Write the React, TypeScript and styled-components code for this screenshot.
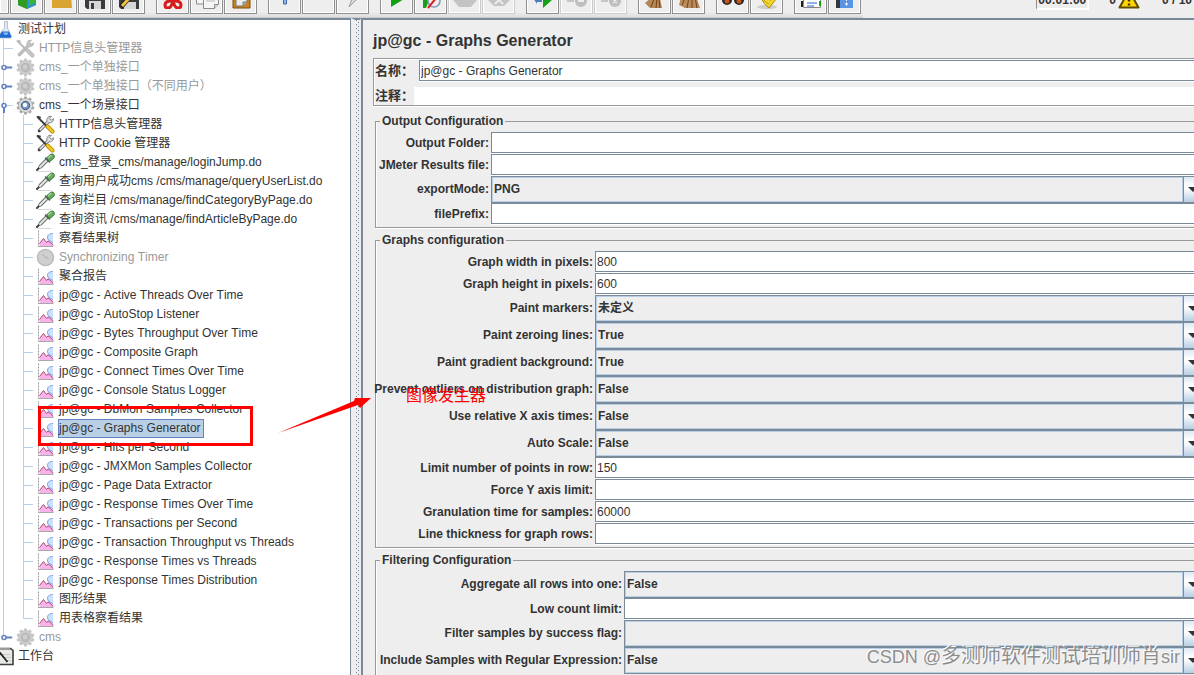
import React from "react";
import styled, { createGlobalStyle, css } from "styled-components";

const INK = "#333333";
const STEEL = "#7a8a99";
const SKY = "#b8cfe5";
const PANEL = "#eeeeee";

const GlobalStyle = createGlobalStyle`
  *, *::before, *::after { box-sizing: border-box; }
  html, body, #root { height: 100%; }
  body {
    margin: 0;
    overflow: hidden;
    background: ${PANEL};
    color: ${INK};
    font: 12px/16px "Liberation Sans", "Noto Sans CJK SC", sans-serif;
    font-kerning: none;
  }
  input, select, button { font: inherit; color: inherit; }
`;

const Shell = styled.div`
  position: relative;
  display: flex;
  flex-direction: column;
  height: 100vh;
  overflow: hidden;
`;

/* ---------- tool bar ---------- */

const TopBar = styled.header`
  display: flex;
  flex: 0 0 18px;
  justify-content: space-between;
  align-items: flex-end;
  overflow: hidden;
`;

const Toolbar = styled.div`
  display: flex;
  gap: 11px;
  align-items: flex-end;
  height: 18px;
  padding: 0 2px 3px 0;
  background: linear-gradient(#eeeeee 70%, #dddddd);
  border-bottom: 1px solid #cccccc;
`;

const ToolGroup = styled.div`
  display: flex;
  gap: 1px;
`;

const ToolButton = styled.button<{ $cut?: boolean }>`
  display: flex;
  justify-content: center;
  align-items: center;
  width: ${(p) => (p.$cut ? 9 : 33)}px;
  height: 34px;
  padding: 0;
  background: ${PANEL};
  border: 1px solid #8f8f8f;
  border-left-width: ${(p) => (p.$cut ? 0 : 1)}px;
  box-shadow: inset 0 0 0 1px #ffffff;
  &:disabled { border-color: #cccccc; }
  svg { flex: none; }
`;

const Status = styled.div`
  display: flex;
  align-items: flex-end;
  gap: 8px;
  height: 18px;
  margin-right: 2px;
  padding-bottom: 8px;
  font-weight: bold;
  white-space: nowrap;
`;

const Clock = styled.output`
  padding: 0 1px;
  margin-right: 12px;
  border: solid;
  border-width: 1px 2px 2px 1px;
  border-color: #8f8f8f #ffffff #ffffff #8f8f8f;
`;

const Count = styled.span`
  padding-bottom: 2px;
`;

const WarningSlot = styled.span`
  display: flex;
  margin: 0 14px 1px -6px;
`;

/* ---------- split view ---------- */

const Split = styled.div`
  display: flex;
  flex: 1;
  min-height: 0;
`;

const TreePane = styled.nav`
  flex: 0 0 351px;
  overflow: hidden;
  background: #ffffff;
  border-top: 2px solid ${STEEL};
  border-right: 1px solid ${STEEL};
`;

const Divider = styled.div`
  flex: 0 0 10px;
  background:
    conic-gradient(at 1px 1px, transparent 75%, #6f7f98 0) 1px 0 / 4px 4px repeat-y,
    conic-gradient(at 1px 1px, transparent 75%, #6f7f98 0) 3px 2px / 4px 4px repeat-y,
    ${PANEL};
  border: solid ${PANEL};
  border-width: 2px 1px 0 4px;
  border-top-color: ${STEEL};
`;

const MainPane = styled.main`
  flex: 1;
  min-width: 0;
  overflow: hidden;
  border-top: 2px solid ${STEEL};
  border-left: 2px solid ${STEEL};
`;

/* ---------- tree ---------- */

const TreeList = styled.ul`
  margin: 0;
  padding: 0;
  list-style: none;
`;

const TreeRow = styled.li`
  display: flex;
  align-items: center;
  height: 19px;
  white-space: nowrap;
`;

type GuideKind = "pass" | "branch" | "last" | "none";

const Guide = styled.span<{ $kind: GuideKind; $wide?: boolean }>`
  display: flex;
  align-items: center;
  flex: 0 0 ${(p) => (p.$wide ? 20 : 16)}px;
  height: 19px;
  background-repeat: no-repeat;
  ${(p) =>
    p.$kind !== "none" &&
    css`
      background-image: linear-gradient(${SKY}, ${SKY}), linear-gradient(${SKY}, ${SKY});
      background-position: 3px 0, 3px 9px;
      background-size: 1px ${p.$kind === "last" ? "10px" : "100%"}, ${p.$kind === "pass" ? "1px" : "10px"} 1px;
    `}
`;

const IconSlot = styled.span<{ $root?: boolean }>`
  display: flex;
  justify-content: flex-end;
  flex: 0 0 ${(p) => (p.$root ? 14 : 19)}px;
  overflow: hidden;
  margin-right: 3px;
`;

const NodeLabel = styled.a<{ $off?: boolean; $selected?: boolean }>`
  height: 19px;
  padding: 0 2px 0 0;
  border: 1px solid ${(p) => (p.$selected ? "#6382bf" : "transparent")};
  background: ${(p) => (p.$selected ? SKY : "transparent")};
  color: ${(p) => (p.$off ? "#999999" : INK)};
  line-height: 17px;
  text-decoration: none;
`;

/* ---------- form ---------- */

const Form = styled.form`
  display: flex;
  flex-direction: column;
  gap: 4px;
  margin-right: -16px;
  padding: 8px 2px 0 10px;
`;

const Title = styled.h1`
  margin: 0;
  font-size: 16px;
  line-height: 26px;
`;

const NameBox = styled.div`
  display: grid;
  gap: 6px;
  margin-bottom: 3px;
  padding: 1px;
  border: 1px solid #999999;
  box-shadow: inset 1px 1px 0 #ffffff, 0 1px 0 #ffffff;
`;

const NameRow = styled.div<{ $gap: number }>`
  display: flex;
  align-items: center;
  gap: ${(p) => p.$gap}px;
  font-size: 13px;
`;

const Label = styled.label`
  justify-self: end;
  font-weight: bold;
  font-kerning: normal;
  white-space: nowrap;
`;

const TextInput = styled.input<{ $plain?: boolean }>`
  flex: 1;
  width: 100%;
  min-width: 0;
  height: ${(p) => (p.$plain ? 17 : 21)}px;
  padding: 0 1px;
  border: ${(p) => (p.$plain ? 0 : 1)}px solid ${STEEL};
  border-radius: 0;
  outline: 0;
  background: #ffffff;
  box-shadow: 0 1px 0 #ffffff;
  font-size: 12px;
`;

const Group = styled.fieldset<{ $labels: number }>`
  display: grid;
  grid-template-columns: ${(p) => p.$labels}px minmax(0, 1fr);
  column-gap: 2px;
  align-items: center;
  min-width: 0;
  margin: 0 0 0 2px;
  padding: 3px 4px 2px;
  border: 1px solid #999999;
  box-shadow: inset 1px 0 0 #ffffff, 0 1px 0 #ffffff;
`;

const Legend = styled.legend`
  height: 16px;
  padding: 0 2px;
  font-weight: bold;
`;

const FieldRow = styled.div`
  display: grid;
  grid-column: 1 / -1;
  grid-template-columns: subgrid;
  align-items: center;
  padding-bottom: 1px;
`;

const ComboRow = styled(FieldRow)`
  padding-bottom: 0;
  ${Label} { padding-bottom: 2px; }
`;

const Combo = styled.div`
  display: flex;
  height: 27px;
  border: 1px solid ${STEEL};
`;

const Select = styled.select`
  flex: 1;
  min-width: 0;
  padding: 0 1px 2px;
  appearance: none;
  border: 1px solid ${SKY};
  border-radius: 0;
  outline: 0;
  background: ${PANEL};
  font-weight: bold;
`;

const ComboArrow = styled.span`
  display: flex;
  justify-content: center;
  align-items: center;
  flex: 0 0 19px;
  border-left: 1px solid ${STEEL};
  background: linear-gradient(#dde8f3, #ffffff 35%, #ffffff 45%, #b8cfe5);
`;

/* ---------- annotations over the window ---------- */

const Frame = styled.div`
  position: absolute;
  left: 38px;
  top: 406px;
  width: 215px;
  height: 40px;
  border: 3px solid #ff0000;
  pointer-events: none;
`;

const Pointer = styled.svg`
  position: absolute;
  left: 276px;
  top: 396px;
  pointer-events: none;
`;

const Note = styled.p`
  position: absolute;
  left: 406px;
  top: 385px;
  margin: 0;
  color: #ff0000;
  font-size: 16px;
  line-height: 22px;
`;

const Watermark = styled.p`
  position: absolute;
  right: 14px;
  bottom: 4px;
  margin: 0;
  color: #8e8e8e;
  font-size: 18px;
  line-height: 28px;
  text-shadow: -1px -1px 0 #ffffff;
  white-space: nowrap;
  pointer-events: none;
`;

const Author = styled.span`
  font-size: 20px;
`;

/* ---------- icons ---------- */

const gearTeeth = Array.from({ length: 10 }, (_, i) => i * 36);

const Gear = ({ live }: { live?: boolean }) => (
  <svg width="19" height="19" viewBox="0 0 19 19">
    <g fill={live ? "#aaaaaa" : "#c6c6c6"}>
      {gearTeeth.map((a) => (
        <rect key={a} x="8" y="0.5" width="3" height="4" rx="0.6" transform={`rotate(${a} 9.5 9.5)`} />
      ))}
    </g>
    <circle cx="9.5" cy="9.5" r="7" fill={live ? "#dcdee0" : "#cdcdcd"} stroke={live ? "#a2a2a2" : "#c2c2c2"} strokeWidth="0.8" />
    <circle cx="9.5" cy="9.5" r="4.2" fill={live ? "#6f93c0" : "#bdbdbd"} stroke={live ? "#4a5c74" : "#b4b4b4"} />
    <circle cx="9" cy="9" r="2.2" fill={live ? "#f2f8ff" : "#cfcfcf"} />
  </svg>
);

const Tools = ({ off }: { off?: boolean }) => (
  <svg width="19" height="19" viewBox="0 0 19 19" fill="none" strokeLinecap="round">
    <path d="M3.500 15.500L13.500 5.500" stroke={off ? "#b8b8b8" : "#6e6e6e"} strokeWidth="3.200" />
    <path
      d="M15.200 1.200l-2.700 0.400-1.700 2.600 0.400 3 3 0.700 2.700-1.500 0.800-2.600-2.300 1.200-1.700-1.300z"
      fill={off ? "#c2c2c2" : "#d9dcdf"}
      stroke={off ? "#b5b5b5" : "#777777"}
      strokeWidth="0.8"
    />
    <path d="M3.500 15.500L13 6" stroke={off ? "#c2c2c2" : "#e2e2e2"} strokeWidth="1.600" />
    <path d="M2 2.500L10.500 11" stroke={off ? "#b8b8b8" : "#3c3c3c"} strokeWidth="1.800" />
    <path d="M1.500 2l2.500 0.500" stroke={off ? "#b8b8b8" : "#3c3c3c"} strokeWidth="1.800" />
    <path d="M11.500 11.500l5 5" stroke={off ? "#b8b8b8" : "#a67c00"} strokeWidth="4" />
    <path d="M11.500 11.500l5 5" stroke={off ? "#c4c4c4" : "#f6c61c"} strokeWidth="2.600" />
    <circle cx="3" cy="16" r="1.300" fill={off ? "#b8b8b8" : "#444444"} />
  </svg>
);

const Pipette = () => (
  <svg width="19" height="19" viewBox="0 0 19 19" fill="none" strokeLinecap="round">
    <path d="M1 17L5 13" stroke="#3f3f3f" strokeWidth="2" />
    <path d="M4.500 13.500L10.500 7.500" stroke="#6c706e" strokeWidth="4" />
    <path d="M4 14L10.500 7.500" stroke="#e4e9e6" strokeWidth="2" />
    <path d="M13 6L16 3.500" stroke="#427f3e" strokeWidth="5.600" />
    <path d="M13 6L16 3.500" stroke="#68ab5e" strokeWidth="4" />
    <path d="M12.500 4.500L15 2.500" stroke="#a9d99d" strokeWidth="1.200" />
    <path d="M9.500 5l4 4" stroke="#47664a" strokeWidth="1.600" />
    <path d="M2 18.500h13" stroke="#d5d5d5" />
  </svg>
);

const Chart = () => (
  <svg width="18" height="19" viewBox="0 0 18 19">
    <path d="M1.500 1.500v16" fill="none" stroke="#9a9a9a" strokeDasharray="2 1" />
    <path d="M1 17.500h15.500" fill="none" stroke="#a8a8a8" />
    <path d="M2.500 17v-3l4-4.500 2.500 3.500 3-1.500 4 1.500v4z" fill="#f7b3ea" />
    <path d="M16 4.500h-3l-3 2.500v4l2.500 2.500 3.500 1z" fill="#cbe1fd" />
    <path d="M16 4.500h-1.500q-4.500 1-4 4.500 .3 2.500 5.500 4.500" fill="none" stroke="#86a9e2" />
    <path d="M2.500 14.500l4-5 3 4 1.500-1.500 2.500 1.500 2.500 3" fill="none" stroke="#b8456f" />
  </svg>
);

const Timer = () => (
  <svg width="19" height="19" viewBox="0 0 19 19">
    <circle cx="9.500" cy="9.500" r="8" fill="#cfcfcf" stroke="#bcbcbc" strokeWidth="1.500" />
    <path d="M6.500 6l3 3.500 3 1" fill="none" stroke="#a9a9a9" />
  </svg>
);

const Flask = () => (
  <svg width="14" height="19" viewBox="0 0 14 19">
    <path d="M4.500 1.500h3v6.500l4 8.500q0 1.500-1.500 1.500H.5V13l4-5z" fill="#e4eaf2" stroke="#a7b4c6" strokeWidth="0.8" />
    <path d="M2 11.500h7l2.300 5q0 1.300-1.300 1.300H0v-3z" fill="#1f6ad0" />
    <path d="M3 12.500l4.500-.3 1 2-4 1z" fill="#7fb4f5" />
  </svg>
);

const Clipboard = () => (
  <svg width="14" height="19" viewBox="0 0 14 19">
    <path d="M-3 1.500h13.500l2.500 2V17.500H-3z" fill="#e9e9e6" stroke="#3f3f3f" strokeWidth="1.600" />
    <path d="M0 2h10" stroke="#9a9a9a" strokeWidth="2" />
    <path d="M2 7.500h8M4 10.500h7M6 13.500h5" stroke="#bccbd2" />
    <path d="M-1 4.500L7.500 15" stroke="#222222" strokeWidth="1.800" />
  </svg>
);

const Knob = ({ open }: { open?: boolean }) => (
  <svg width="13" height="19" viewBox="0 0 13 19">
    <path d={open ? "M4 11v6" : "M6 9.500h6"} stroke="#6382bf" strokeWidth="2" />
    <circle cx="4" cy="9.500" r="2" fill="#ffffff" stroke="#6382bf" strokeWidth="1.600" />
  </svg>
);

const Warning = () => (
  <svg width="22" height="20" viewBox="0 0 22 20">
    <path d="M11 1.500L20.500 18.500H1.500z" fill="#ffd400" stroke="#5f4c00" strokeWidth="2" strokeLinejoin="round" />
    <path d="M11 6.500v6M11 14.500v2" stroke="#3b3000" strokeWidth="2.400" />
  </svg>
);

const toolArt: Record<string, React.ReactNode> = {
  New: null,
  Templates: (
    <>
      <path d="M3 8l9-4 9 4v12l-9 4-9-4z" fill="#4cb828" />
      <path d="M12 10l9-2v12l-9 4z" fill="#2f8fd8" />
      <path d="M14 9h6v9l-6 3z" fill="#38b43a" />
      <path d="M3 8l9 3v13l-9-4z" fill="#2d9c22" />
    </>
  ),
  Open: (
    <>
      <path d="M3 6h8l2 3h8v14H3z" fill="#a87408" />
      <path d="M3 10h19l1 13H3z" fill="#d9a432" />
    </>
  ),
  Save: (
    <>
      <path d="M2 4h20v20H4l-2-2z" fill="#3b3b3f" />
      <path d="M6 16h12v8H6z" fill="#d6d6d6" />
      <path d="M8 18h3v6H8z" fill="#3b3b3f" />
    </>
  ),
  "Save as": (
    <>
      <path d="M2 4h20v20H4l-2-2z" fill="#3b3b3f" />
      <path d="M7 17h12v7H7z" fill="#d6d6d6" />
      <path d="M4 22L15 9" stroke="#222222" strokeWidth="5" />
      <path d="M5 21L16 9" stroke="#f0c23a" strokeWidth="3" />
    </>
  ),
  Cut: (
    <g fill="none" stroke="#d81c1c" strokeWidth="3">
      <path d="M8 5l7 13M16 5L9 18" stroke="#9a9a9a" strokeWidth="2" />
      <path d="M12 14l-4 2q-4 1-4 4 0 3 3 3 4 0 5-9zM12 14l4 2q4 1 4 4 0 3-3 3-4 0-5-9z" />
    </g>
  ),
  Copy: (
    <g fill="#f6f6f4" stroke="#8c8c8c">
      <path d="M1.500 4h15v15h-15z" />
      <path d="M8.500 8h15v11l-4 4.500h-11z" />
      <path d="M19.500 23.500v-4h4" fill="#d8d8d8" />
      <path d="M11 13h9M11 16h9" stroke="#bbbbbb" />
    </g>
  ),
  Paste: (
    <>
      <path d="M4 3h17v20H4z" fill="#c88222" stroke="#7a4c0c" />
      <path d="M7 6h11v11l-4 4H7z" fill="#ececec" stroke="#777777" />
      <path d="M14 21v-4h4" fill="#bbbbbb" stroke="#777777" />
    </>
  ),
  Expand: <path d="M10.500 9h3v10h-3z" fill="#8fb6ea" stroke="#3d67ad" />,
  Collapse: null,
  Toggle: <path d="M8 22l3-8 8-8 3 3-9 8z" fill="#d5dcd8" stroke="#9aa39d" />,
  Start: <path d="M6 5l13 9L6 22z" fill="#12a012" />,
  "Start no pauses": (
    <>
      <path d="M4 5l7 8-4 10H4z" fill="#18a018" />
      <circle cx="15" cy="16" r="6" fill="#eeeeee" stroke="#8299bb" strokeWidth="1.500" />
      <path d="M9 23L22 7" stroke="#d82222" strokeWidth="2" />
    </>
  ),
  Stop: <path d="M6 3h12l6 6v6l-6 7H6l-6-7V9z" fill="#c4c4c4" />,
  Shutdown: (
    <>
      <path d="M7 3h10l6 6v6l-6 6H7l-6-6V9z" fill="#c4c4c4" />
      <path d="M8 11l8 8M16 11l-8 8" stroke="#ededed" strokeWidth="2" />
    </>
  ),
  "Remote start": (
    <>
      <path d="M12 5l9 10-9 8z" fill="#15a015" />
      <path d="M2 13l4-2v2h5v4H6v2z" fill="#4f7db8" />
    </>
  ),
  "Remote stop": (
    <>
      <circle cx="16" cy="16" r="6" fill="#bebebe" />
      <path d="M2 14h7v3H2z" fill="#c6c6c6" />
      <path d="M13 16h6" stroke="#eeeeee" strokeWidth="2" />
    </>
  ),
  "Remote shutdown": (
    <>
      <circle cx="16" cy="16" r="6" fill="#bebebe" />
      <path d="M2 14h7v3H2z" fill="#c6c6c6" />
      <path d="M14 14l4 4M18 14l-4 4" stroke="#eeeeee" strokeWidth="1.500" />
    </>
  ),
  Clear: (
    <>
      <path d="M9 12l7-3 3 14H7l-5-5z" fill="#b48556" />
      <path d="M11 14l-3 8M14 13l-1 10M16 13l1 10" stroke="#70431c" />
      <path d="M2 13l7 2" stroke="#999999" strokeWidth="2" />
    </>
  ),
  "Clear all": (
    <>
      <path d="M4 12l14-4 5 15H8l-6-3z" fill="#b98a5a" />
      <path d="M8 13l-3 7M12 12l-2 11M15 12l0 11M18 12l2 11" stroke="#70431c" />
    </>
  ),
  Search: (
    <>
      <path d="M3 7h7l2 4 2-4h7l3 8H0z" fill="#343030" />
      <circle cx="6" cy="15" r="5" fill="#2a2424" />
      <circle cx="18" cy="15" r="5" fill="#2a2424" />
      <circle cx="6" cy="16" r="2.500" fill="#c3581e" />
      <circle cx="18" cy="16" r="2.500" fill="#c3581e" />
    </>
  ),
  "Reset search": (
    <>
      <ellipse cx="12" cy="22" rx="10" ry="2" fill="#cccccc" />
      <path d="M5 11L18 4l4 9-8 10q-5-3-9-12z" fill="#f2d42c" stroke="#a98a10" />
      <path d="M8 14q3 4 6 5M12 11l4 5" stroke="#c8a818" />
    </>
  ),
  Functions: (
    <>
      <path d="M4.500 4h17v18.500h-17z" fill="#ffffff" stroke="#888888" />
      <path d="M3 16v6" stroke="#222222" strokeWidth="2" />
      <path d="M8 18h10M8 21h7" stroke="#2765d8" strokeWidth="1.200" />
      <path d="M21 16v5" stroke="#19a019" strokeWidth="2" />
    </>
  ),
  Help: (
    <>
      <path d="M3 4h17v19H3z" fill="#5a94e4" />
      <path d="M3 4h4v19H3z" fill="#33363c" />
      <path d="M13.500 12v4M13.500 17.500v3M12 19h3" stroke="#ffffff" />
    </>
  ),
};

const toolGroups: string[][] = [
  ["New", "Templates", "Open", "Save", "Save as"],
  ["Cut", "Copy", "Paste"],
  ["Expand", "Collapse", "Toggle"],
  ["Start", "Start no pauses", "Stop", "Shutdown"],
  ["Remote start", "Remote stop", "Remote shutdown"],
  ["Clear", "Clear all"],
  ["Search", "Reset search"],
  ["Functions", "Help"],
];

const disabledTools = new Set(["Stop", "Shutdown", "Remote stop", "Remote shutdown"]);

/* ---------- data ---------- */

type Kind = "flask" | "tools" | "toolsOff" | "gear" | "gearOn" | "pipette" | "chart" | "timer" | "clipboard";

const nodeIcons: Record<Kind, React.ReactNode> = {
  flask: <Flask />,
  tools: <Tools />,
  toolsOff: <Tools off />,
  gear: <Gear />,
  gearOn: <Gear live />,
  pipette: <Pipette />,
  chart: <Chart />,
  timer: <Timer />,
  clipboard: <Clipboard />,
};

interface TreeNode {
  text: string;
  kind: Kind;
  depth: 0 | 1 | 2;
  off?: boolean;
  knob?: "open" | "closed";
  last?: boolean;
  selected?: boolean;
}

const leaf = (text: string, kind: Kind = "chart"): TreeNode => ({ text, kind, depth: 2 });

const nodes: TreeNode[] = [
  { text: "测试计划", kind: "flask", depth: 0 },
  { text: "HTTP信息头管理器", kind: "toolsOff", depth: 1, off: true },
  { text: "cms_一个单独接口", kind: "gear", depth: 1, off: true, knob: "closed" },
  { text: "cms_一个单独接口（不同用户）", kind: "gear", depth: 1, off: true, knob: "closed" },
  { text: "cms_一个场景接口", kind: "gearOn", depth: 1, knob: "open" },
  leaf("HTTP信息头管理器", "tools"),
  leaf("HTTP Cookie 管理器", "tools"),
  leaf("cms_登录_cms/manage/loginJump.do", "pipette"),
  leaf("查询用户成功cms /cms/manage/queryUserList.do", "pipette"),
  leaf("查询栏目 /cms/manage/findCategoryByPage.do", "pipette"),
  leaf("查询资讯 /cms/manage/findArticleByPage.do", "pipette"),
  leaf("察看结果树"),
  { ...leaf("Synchronizing Timer", "timer"), off: true },
  leaf("聚合报告"),
  leaf("jp@gc - Active Threads Over Time"),
  leaf("jp@gc - AutoStop Listener"),
  leaf("jp@gc - Bytes Throughput Over Time"),
  leaf("jp@gc - Composite Graph"),
  leaf("jp@gc - Connect Times Over Time"),
  leaf("jp@gc - Console Status Logger"),
  leaf("jp@gc - DbMon Samples Collector"),
  { ...leaf("jp@gc - Graphs Generator"), selected: true },
  leaf("jp@gc - Hits per Second"),
  leaf("jp@gc - JMXMon Samples Collector"),
  leaf("jp@gc - Page Data Extractor"),
  leaf("jp@gc - Response Times Over Time"),
  leaf("jp@gc - Transactions per Second"),
  leaf("jp@gc - Transaction Throughput vs Threads"),
  leaf("jp@gc - Response Times vs Threads"),
  leaf("jp@gc - Response Times Distribution"),
  leaf("图形结果"),
  { ...leaf("用表格察看结果"), last: true },
  { text: "cms", kind: "gear", depth: 1, off: true, knob: "closed", last: true },
  { text: "工作台", kind: "clipboard", depth: 0 },
];

interface FieldSpec {
  label: string;
  value?: string;
  combo?: boolean;
}

const groups: { title: string; labels: number; fields: FieldSpec[] }[] = [
  {
    title: "Output Configuration",
    labels: 109,
    fields: [
      { label: "Output Folder:" },
      { label: "JMeter Results file:" },
      { label: "exportMode:", value: "PNG", combo: true },
      { label: "filePrefix:" },
    ],
  },
  {
    title: "Graphs configuration",
    labels: 213,
    fields: [
      { label: "Graph width in pixels:", value: "800" },
      { label: "Graph height in pixels:", value: "600" },
      { label: "Paint markers:", value: "未定义", combo: true },
      { label: "Paint zeroing lines:", value: "True", combo: true },
      { label: "Paint gradient background:", value: "True", combo: true },
      { label: "Prevent outliers on distribution graph:", value: "False", combo: true },
      { label: "Use relative X axis times:", value: "False", combo: true },
      { label: "Auto Scale:", value: "False", combo: true },
      { label: "Limit number of points in row:", value: "150" },
      { label: "Force Y axis limit:" },
      { label: "Granulation time for samples:", value: "60000" },
      { label: "Line thickness for graph rows:" },
    ],
  },
  {
    title: "Filtering Configuration",
    labels: 242,
    fields: [
      { label: "Aggregate all rows into one:", value: "False", combo: true },
      { label: "Low count limit:" },
      { label: "Filter samples by success flag:", value: "", combo: true },
      { label: "Include Samples with Regular Expression:", value: "False", combo: true },
    ],
  },
];

/* ---------- pieces ---------- */

const TreeItem = ({ node }: { node: TreeNode }) => (
  <TreeRow>
    {node.depth === 2 && <Guide $kind="pass" $wide />}
    {node.depth > 0 && (
      <Guide $kind={node.last ? "last" : "branch"}>{node.knob && <Knob open={node.knob === "open"} />}</Guide>
    )}
    <IconSlot $root={node.depth === 0}>{nodeIcons[node.kind]}</IconSlot>
    <NodeLabel href="#" $off={node.off} $selected={node.selected}>
      {node.text}
    </NodeLabel>
  </TreeRow>
);

const Field = ({ spec, id }: { spec: FieldSpec; id: string }) =>
  spec.combo ? (
    <ComboRow>
      <Label htmlFor={id}>{spec.label}</Label>
      <Combo>
        <Select id={id} defaultValue={spec.value}>
          <option value={spec.value}>{spec.value}</option>
        </Select>
        <ComboArrow aria-hidden="true">
          <svg width="10" height="5" viewBox="0 0 10 5">
            <path d="M0 0h10L5 5z" fill={INK} />
          </svg>
        </ComboArrow>
      </Combo>
    </ComboRow>
  ) : (
    <FieldRow>
      <Label htmlFor={id}>{spec.label}</Label>
      <TextInput id={id} defaultValue={spec.value} />
    </FieldRow>
  );

export default function App() {
  return (
    <Shell>
      <GlobalStyle />
      <TopBar>
        <Toolbar role="toolbar">
          {toolGroups.map((tools) => (
            <ToolGroup key={tools[0]}>
              {tools.map((name) => (
                <ToolButton key={name} type="button" aria-label={name} $cut={name === "New"} disabled={disabledTools.has(name)}>
                  {toolArt[name] && (
                    <svg width="24" height="24" viewBox="0 0 24 24" fill="none">
                      {toolArt[name]}
                    </svg>
                  )}
                </ToolButton>
              ))}
            </ToolGroup>
          ))}
        </Toolbar>
        <Status>
          <Clock>00:01:00</Clock>
          <Count>0</Count>
          <WarningSlot>
            <Warning />
          </WarningSlot>
          <Count>0 / 10</Count>
        </Status>
      </TopBar>
      <Split>
        <TreePane>
          <TreeList>
            {nodes.map((node, i) => (
              <TreeItem key={i} node={node} />
            ))}
          </TreeList>
        </TreePane>
        <Divider />
        <MainPane>
          <Form>
            <Title>jp@gc - Graphs Generator</Title>
            <NameBox>
              <NameRow $gap={5}>
                <Label htmlFor="name">名称：</Label>
                <TextInput id="name" defaultValue="jp@gc - Graphs Generator" />
              </NameRow>
              <NameRow $gap={0}>
                <Label htmlFor="comment">注释：</Label>
                <TextInput id="comment" $plain />
              </NameRow>
            </NameBox>
            {groups.map((group, g) => (
              <Group key={group.title} $labels={group.labels}>
                <Legend>{group.title}</Legend>
                {group.fields.map((spec, f) => (
                  <Field key={spec.label} spec={spec} id={`field-${g}-${f}`} />
                ))}
              </Group>
            ))}
          </Form>
        </MainPane>
      </Split>
      <Frame />
      <Pointer width="96" height="38" viewBox="0 0 96 38">
        <path d="M2 37L78 5l1-3h16L84 12l-2-3z" fill="#ff0000" />
      </Pointer>
      <Note>图像发生器</Note>
      <Watermark>
        CSDN @<Author>多测师软件测试培训师肖</Author>sir
      </Watermark>
    </Shell>
  );
}
